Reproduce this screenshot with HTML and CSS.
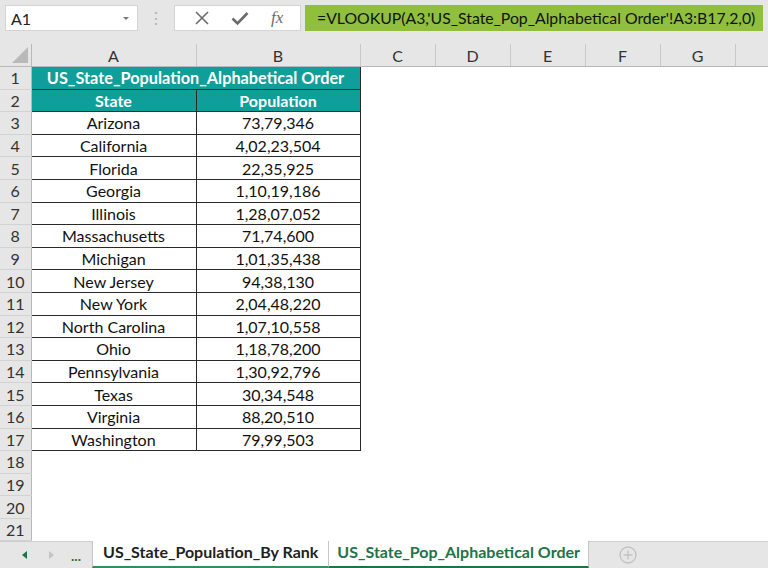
FILE: index.html
```html
<!DOCTYPE html>
<html lang="en">
<head>
    <meta charset="UTF-8">
    <title>US_State_Pop_Alphabetical Order</title>
    <link rel="stylesheet" href="styles.css">
</head>
<body>

<!-- name box + formula bar -->
<div class="toolbar">
    <div class="name-box">
        <span>A1</span>
        <span class="caret"></span>
    </div>
    <div class="grip">⋮</div>
    <div class="fx-box">
        <svg class="icon" width="16" height="16" viewBox="0 0 16 16"><path d="M2 2 L14 14 M14 2 L2 14" stroke="#6b6b6b" stroke-width="1.6" fill="none"/></svg>
        <svg class="icon" width="18" height="16" viewBox="0 0 18 16"><path d="M1.5 8.5 L6.5 13.5 L16.5 3" stroke="#6b6b6b" stroke-width="2.6" fill="none"/></svg>
        <span class="fx">fx</span>
    </div>
    <div class="formula">=VLOOKUP(A3,'US_State_Pop_Alphabetical Order'!A3:B17,2,0)</div>
</div>

<!-- worksheet -->
<table class="sheet">
    <colgroup>
        <col class="c-row">
        <col class="c-a">
        <col class="c-b">
        <col class="c-n"><col class="c-n"><col class="c-n"><col class="c-n"><col class="c-n">
        <col class="c-h">
    </colgroup>
    <thead>
        <tr>
            <th class="corner"><span class="tri"></span></th>
            <th>A</th><th>B</th><th>C</th><th>D</th><th>E</th><th>F</th><th>G</th><th></th>
        </tr>
    </thead>
    <tbody id="rows">
        <tr><th>1</th><td class="title" colspan="2">US_State_Population_Alphabetical Order</td><td></td><td></td><td></td><td></td><td></td><td></td></tr>
        <tr><th>2</th><td class="head">State</td><td class="head">Population</td><td></td><td></td><td></td><td></td><td></td><td></td></tr>
    </tbody>
</table>

<!-- sheet tabs -->
<div class="tabbar">
    <div class="nav">
        <span class="arrow-left"></span>
        <span class="arrow-right"></span>
        <span class="more">...</span>
    </div>
    <div class="tab">US_State_Population_By Rank</div>
    <div class="tab active">US_State_Pop_Alphabetical Order</div>
    <div class="add">
        <svg width="18" height="18" viewBox="0 0 18 18"><circle cx="9" cy="9" r="8" stroke="#c2c2c2" stroke-width="1.3" fill="none"/><path d="M9 4.5 V13.5 M4.5 9 H13.5" stroke="#c2c2c2" stroke-width="1.3"/></svg>
    </div>
</div>

<script>
    const states = [
        ['Arizona', '73,79,346'],
        ['California', '4,02,23,504'],
        ['Florida', '22,35,925'],
        ['Georgia', '1,10,19,186'],
        ['Illinois', '1,28,07,052'],
        ['Massachusetts', '71,74,600'],
        ['Michigan', '1,01,35,438'],
        ['New Jersey', '94,38,130'],
        ['New York', '2,04,48,220'],
        ['North Carolina', '1,07,10,558'],
        ['Ohio', '1,18,78,200'],
        ['Pennsylvania', '1,30,92,796'],
        ['Texas', '30,34,548'],
        ['Virginia', '88,20,510'],
        ['Washington', '79,99,503']
    ];

    const body = document.getElementById('rows');
    const blanks = '<td></td><td></td><td></td><td></td><td></td><td></td>';

    states.forEach((s, i) => {
        const tr = document.createElement('tr');
        tr.innerHTML = `<th>${i + 3}</th><td class="data">${s[0]}</td><td class="data">${s[1]}</td>${blanks}`;
        body.appendChild(tr);
    });

    // empty rows under the table
    for (let n = 18; n <= 21; n++) {
        const tr = document.createElement('tr');
        tr.innerHTML = `<th>${n}</th><td></td><td></td>${blanks}`;
        body.appendChild(tr);
    }
</script>

</body>
</html>
```
FILE: styles.css
```css
body {
    margin: 0;
    width: 768px;
    height: 568px;
    overflow: hidden;
    background-color: #fff;
    font-family: Lato, "Open Sans", sans-serif;
    font-size: 16px;
    color: #111;
}

/* toolbar */
.toolbar {
    height: 44px;
    background-color: #e6e6e6;
    display: flex;
    align-items: flex-start;
    padding-top: 5px;
    box-sizing: border-box;
}
.name-box {
    margin-left: 5px;
    width: 133px;
    height: 26px;
    background-color: #fff;
    border: 1px solid #d4d4d4;
    box-sizing: border-box;
    display: flex;
    align-items: center;
    justify-content: space-between;
    padding: 0 8px 0 5px;
    font-size: 16px;
    color: #222;
}
.caret {
    width: 0;
    height: 0;
    border-left: 3px solid transparent;
    border-right: 3px solid transparent;
    border-top: 3px solid #777;
}
.grip {
    width: 36px;
    text-align: center;
    color: #b0b0b0;
    font-size: 16px;
    line-height: 26px;
}
.fx-box {
    width: 127px;
    height: 26px;
    background-color: #fff;
    border: 1px solid #d4d4d4;
    box-sizing: border-box;
    display: flex;
    align-items: center;
    justify-content: space-around;
    padding: 0 6px 0 8px;
}
.fx {
    font-family: "Liberation Serif", serif;
    font-style: italic;
    font-size: 17px;
    color: #6b6b6b;
}
.formula {
    margin-left: 4px;
    width: 458px;
    height: 26px;
    background-color: #8fbf3c;
    padding-left: 12px;
    box-sizing: border-box;
    line-height: 26px;
    font-size: 15.8px;
    color: #111;
    white-space: nowrap;
    overflow: hidden;
}

/* sheet grid */
.sheet {
    border-collapse: collapse;
    table-layout: fixed;
    width: 768px;
}
.c-row { width: 31px; }
.c-a { width: 165px; }
.c-b { width: 164px; }
.c-n { width: 75px; }
.c-h { width: 33px; }

.sheet thead th {
    height: 22px;
    padding: 0;
    background-color: #e6e6e6;
    font-weight: normal;
    color: #333;
    border-right: 1px solid #c8c8c8;
    border-bottom: 1px solid #b8b8b8;
}
.sheet thead th.corner {
    position: relative;
    border-right: 1px solid #b8b8b8;
}
.tri {
    position: absolute;
    right: 3px;
    bottom: 3px;
    width: 0;
    height: 0;
    border-left: 16px solid transparent;
    border-bottom: 16px solid #b9b9b9;
}
.sheet tbody tr {
    height: 22.6px;
}
.sheet tbody th {
    padding: 0;
    background-color: #e6e6e6;
    font-weight: normal;
    color: #333;
    border-right: 1px solid #b8b8b8;
    border-bottom: 1px solid #d2d2d2;
}
.sheet td {
    padding: 0;
    text-align: center;
    white-space: nowrap;
}
.sheet td.title {
    background-color: #0f9e99;
    color: #fff;
    font-weight: bold;
    font-size: 16.3px;
    border: 1px solid #2a2a2a;
}
.sheet td.head {
    background-color: #0f9e99;
    color: #fff;
    font-weight: bold;
    border: 1px solid #2a2a2a;
}
.sheet td.data {
    border: 1px solid #2a2a2a;
    color: #111;
}

/* tabs */
.tabbar {
    position: absolute;
    left: 0;
    top: 541px;
    width: 768px;
    height: 27px;
    background-color: #e6e6e6;
    border-top: 1px solid #cfcfcf;
    box-sizing: border-box;
    display: flex;
}
.nav {
    width: 92px;
    display: flex;
    align-items: center;
}
.arrow-left {
    margin-left: 22px;
    width: 0;
    height: 0;
    border-top: 4px solid transparent;
    border-bottom: 4px solid transparent;
    border-right: 5px solid #217346;
}
.arrow-right {
    margin-left: 22px;
    width: 0;
    height: 0;
    border-top: 4px solid transparent;
    border-bottom: 4px solid transparent;
    border-left: 5px solid #c4c4c4;
}
.more {
    margin-left: 17px;
    color: #217346;
    font-weight: bold;
    font-size: 14px;
}
.tab {
    background-color: #fff;
    font-weight: bold;
    color: #222;
    padding: 0 10px;
    line-height: 22px;
    border-left: 1px solid #c6c6c6;
    border-bottom: 2px solid #3b8a5c;
    margin-top: -1px;
    white-space: nowrap;
}
.tab.active {
    color: #217346;
    border-left: 1px solid #c6c6c6;
    border-right: 1px solid #c6c6c6;
    border-bottom: 2px solid #217346;
    padding: 0 8px;
}
.add {
    margin-left: 30px;
    display: flex;
    align-items: center;
}
```
